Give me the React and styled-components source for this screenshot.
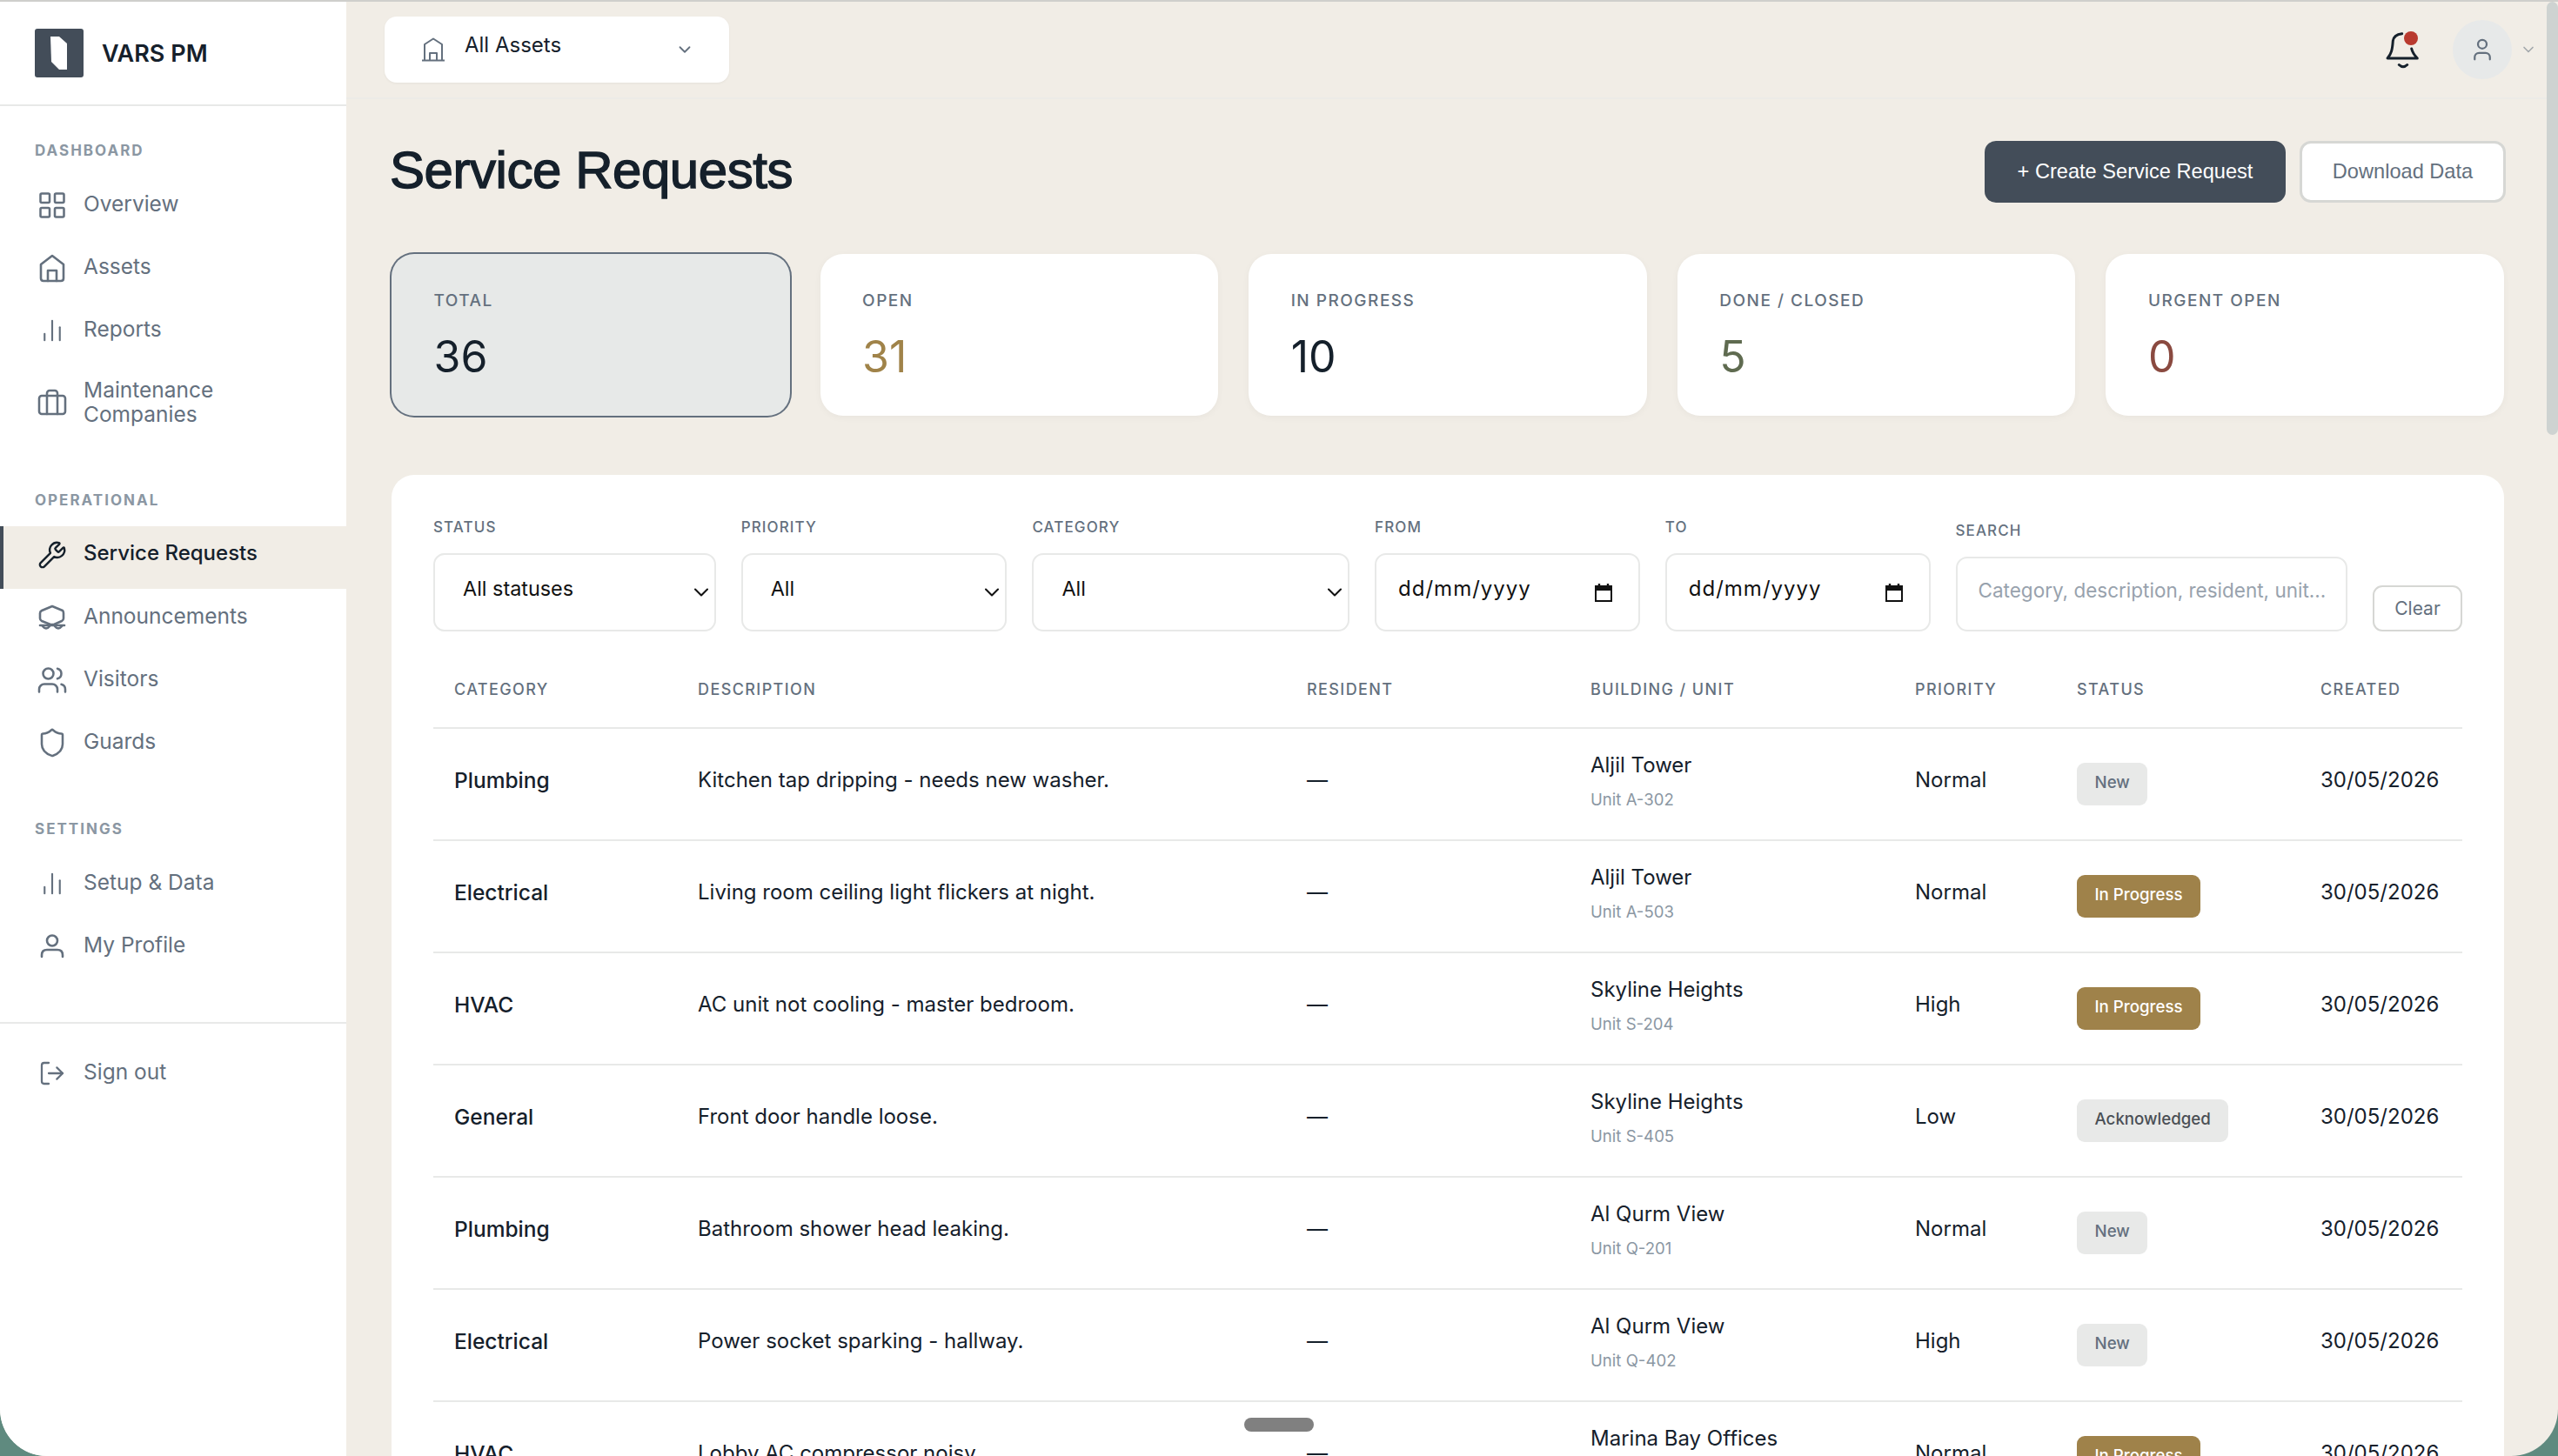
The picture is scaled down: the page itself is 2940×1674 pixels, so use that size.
import React from "react";
import styled, { createGlobalStyle } from "styled-components";
import { LayoutGrid, ChartNoAxesColumn, Briefcase, Wrench, Users, Shield, LogOut, ChevronDown, User } from "lucide-react";

const GlobalStyle = createGlobalStyle`
  html, body {
    margin: 0;
    height: 100%;
    overflow: hidden;
    background: #5f8a7f;
  }
  * { box-sizing: border-box; }
`;

const UI_FONT = `Inter, "Noto Sans", sans-serif`;
const HEAD_FONT = `"Liberation Sans", Arial, sans-serif`;
const INK = "#15202b";
const SLATE = "#64707e";
const MUTED = "#8b97a3";
const LINE = "#e8e9e8";
const COLUMNS = "280px 700px 326px 373px 186px 280px 187px";

const Windowed = styled.div`
  position: relative;
  display: flex;
  width: 2940px;
  height: 1674px;
  overflow: hidden;
  border-top: 2px solid #cfcfcc;
  border-radius: 0 0 54px 54px;
  background: #f1ede6;
  font-family: ${UI_FONT};
  color: ${INK};
`;

const Sidebar = styled.aside`
  flex: 0 0 398px;
  display: flex;
  flex-direction: column;
  background: #fff;
`;

const Brand = styled.div`
  display: flex;
  align-items: center;
  gap: 21px;
  height: 120px;
  padding-left: 40px;
  border-bottom: 2px solid ${LINE};
`;

const BrandName = styled.span`
  font-size: 27px;
  font-weight: 600;
`;

const NavSection = styled.nav`
  padding-top: ${(p) => p.$top}px;
`;

const NavLabel = styled.div`
  height: 24px;
  margin-bottom: 18px;
  padding-left: 40px;
  font-size: 17px;
  line-height: 24px;
  font-weight: 700;
  letter-spacing: 2px;
  color: ${MUTED};
`;

const NavItem = styled.a`
  display: flex;
  align-items: center;
  gap: 18px;
  min-height: ${(p) => (p.$tall ? 96 : 72)}px;
  padding: 0 0 6px 38px;
  border-left: 4px solid ${(p) => (p.$active ? "#434d59" : "transparent")};
  background: ${(p) => (p.$active ? "#f1ede6" : "transparent")};
  color: ${(p) => (p.$active ? INK : SLATE)};
  font-size: ${(p) => (p.$active ? 24 : 24.5)}px;
  font-weight: ${(p) => (p.$active ? 500 : 400)};
  line-height: 28px;
`;

const NavIcon = styled.span`
  flex: 0 0 36px;
  display: flex;
  justify-content: center;
  align-items: center;
  height: 36px;
`;

const NavText = styled.span`
  position: relative;
  top: -2px;
  max-width: 220px;
`;

const SignOutBlock = styled.div`
  margin-top: 48px;
  padding-top: 24px;
  border-top: 2px solid ${LINE};
`;

const Main = styled.main`
  flex: 1;
  min-width: 0;
`;

const Topbar = styled.header`
  display: flex;
  align-items: flex-start;
  justify-content: space-between;
  height: 112px;
  padding: 17px 24px 0 44px;
  border-bottom: 2px solid #ecebe7;
`;

const AssetPicker = styled.div`
  display: flex;
  align-items: center;
  width: 396px;
  height: 76px;
  padding: 0 40px 0 42px;
  gap: 22px;
  border-radius: 14px;
  background: #fff;
  box-shadow: 0 1px 3px rgba(0, 0, 0, 0.05);
  font-size: 24px;
`;

const AssetName = styled.span`
  flex: 1;
  position: relative;
  top: -6px;
`;

const TopActions = styled.div`
  display: flex;
  align-items: center;
  height: 68px;
  margin-top: 4px;
`;

const BellWrap = styled.div`
  position: relative;
  width: 44px;
  height: 48px;
  margin-right: 36px;
`;

const BellDot = styled.span`
  position: absolute;
  left: 24px;
  top: 3px;
  width: 16px;
  height: 16px;
  border-radius: 50%;
  background: #b93a2f;
`;

const Avatar = styled.div`
  display: flex;
  align-items: center;
  justify-content: center;
  width: 68px;
  height: 68px;
  border-radius: 50%;
  background: #e7e9e9;
  color: ${SLATE};
`;

const AvatarCaret = styled.span`
  display: flex;
  margin-left: 9px;
  color: #a3a8ac;
`;

const Content = styled.div`
  padding: 48px 62px 0 52px;
`;

const TitleRow = styled.div`
  display: flex;
  justify-content: space-between;
  align-items: center;
  height: 71px;
`;

const Title = styled.h1`
  margin: 0 0 4px -2px;
  font-family: ${HEAD_FONT};
  font-size: 60px;
  font-weight: 400;
  letter-spacing: -0.45px;
  -webkit-text-stroke: 1.4px ${INK};
  color: ${INK};
`;

const ButtonRow = styled.div`
  display: flex;
  gap: 16px;
  margin-right: -2px;
`;

const Button = styled.button`
  height: 71px;
  width: ${(p) => (p.$primary ? 346 : 237)}px;
  padding: 0;
  border: ${(p) => (p.$primary ? "none" : "3px solid #d6d7d4")};
  border-radius: 13px;
  background: ${(p) => (p.$primary ? "#434d59" : "#fff")};
  color: ${(p) => (p.$primary ? "#fff" : SLATE)};
  font-family: ${HEAD_FONT};
  font-size: 23.6px;
`;

const StatGrid = styled.div`
  display: grid;
  grid-template-columns: repeat(5, 1fr);
  gap: 35px;
  margin-top: 59px;
`;

const StatCard = styled.div`
  height: 186px;
  padding: 42px 48.5px 0;
  border-radius: 26px;
  background: ${(p) => (p.$active ? "#e7e9e8" : "#fff")};
  box-shadow: ${(p) => (p.$active ? `0 0 0 2px ${SLATE}` : "0 2px 8px rgba(0, 0, 0, 0.04)")};
`;

const StatLabel = styled.div`
  font-size: 19px;
  line-height: 24px;
  font-weight: 500;
  letter-spacing: 1.5px;
  color: ${SLATE};
`;

const StatValue = styled.div`
  margin-top: 22px;
  font-size: 50px;
  line-height: 60px;
  color: ${(p) => p.$color};
`;

const Panel = styled.section`
  margin-top: 68px;
  padding: 48px 48px 0;
  border-radius: 26px 26px 0 0;
  background: #fff;
`;

const FilterRow = styled.div`
  display: flex;
  align-items: flex-end;
  gap: 29px;
`;

const Field = styled.label`
  display: block;
  width: ${(p) => p.$width}px;
`;

const FieldLabel = styled.div`
  height: 24px;
  margin-bottom: 18px;
  font-size: 17px;
  line-height: 24px;
  font-weight: 500;
  letter-spacing: 1.1px;
  color: ${SLATE};
`;

const Control = styled.div`
  display: flex;
  align-items: center;
  justify-content: space-between;
  height: ${(p) => (p.$short ? 86 : 90)}px;
  padding: 0 ${(p) => p.$right}px 0 ${(p) => p.$left}px;
  border: 2px solid ${LINE};
  border-radius: 13px;
  background: #fff;
`;

const ControlText = styled.span`
  position: relative;
  top: -5px;
  white-space: nowrap;
  font-size: ${(p) => p.$size}px;
  letter-spacing: ${(p) => p.$spacing || 0}px;
  color: ${(p) => p.$color || "#111"};
`;

const ClearButton = styled.button`
  width: 103px;
  height: 53px;
  padding: 0;
  border: 2px solid #d6d7d4;
  border-radius: 11px;
  background: #fff;
  color: ${SLATE};
  font-family: ${UI_FONT};
  font-size: 21px;
`;

const TableHead = styled.div`
  display: grid;
  grid-template-columns: ${COLUMNS};
  align-items: center;
  height: 92px;
  margin-top: 20px;
  padding-top: 3px;
  border-bottom: 2px solid ${LINE};
`;

const HeadCell = styled.div`
  padding-left: 24px;
  font-size: 18px;
  font-weight: 500;
  letter-spacing: 1.4px;
  color: ${SLATE};
`;

const Row = styled.div`
  display: grid;
  grid-template-columns: ${COLUMNS};
  align-items: center;
  height: 129px;
  border-bottom: 2px solid ${LINE};
`;

const Cell = styled.div`
  padding: 0 0 10px 24px;
  font-size: ${(p) => (p.$strong ? 24.5 : 24)}px;
  font-weight: ${(p) => (p.$strong ? 500 : 400)};
  white-space: nowrap;
`;

const BuildingCell = styled.div`
  padding: 0 0 8px 24px;
`;

const BuildingName = styled.div`
  font-size: 24px;
  line-height: 36px;
`;

const UnitName = styled.div`
  margin-top: 7px;
  font-size: 18.6px;
  line-height: 28px;
  color: ${MUTED};
`;

const BadgeCell = styled.div`
  padding-left: 24px;
`;

const Badge = styled.span`
  display: inline-flex;
  align-items: center;
  height: 49px;
  padding: 0 20.5px 5px;
  border-radius: 9px;
  background: ${(p) => (p.$tone === "progress" ? "#9f824a" : "#e8e9e8")};
  color: ${(p) => (p.$tone === "progress" ? "#fff" : p.$tone === "ack" ? "#4a4f55" : SLATE)};
  font-size: 18.7px;
  font-weight: 500;
`;

const ScrollThumb = styled.div`
  position: absolute;
  top: 0;
  right: 0;
  width: 13px;
  height: 498px;
  border-radius: 7px;
  background: #ced3d1;
`;

const HomePill = styled.div`
  position: absolute;
  left: 1430px;
  bottom: 28px;
  width: 80px;
  height: 16px;
  border-radius: 8px;
  background: #808080;
  box-shadow: 0 0 0 14px rgba(255, 255, 255, 0.35);
`;

const Logo = () => (
  <svg width="56" height="56" viewBox="0 0 56 56">
    <rect width="56" height="56" rx="3" fill="#434d59" />
    <path d="M18 9H28L37 17V47H28L19 38Z" fill="#fff" />
  </svg>
);

const Stroke = ({ children, size = 36, box = 36 }) => (
  <svg width={size} height={size} viewBox={`0 0 ${box} ${box}`} fill="none" stroke="currentColor" strokeWidth="2.6" strokeLinecap="round" strokeLinejoin="round">
    {children}
  </svg>
);

const HouseIcon = () => (
  <Stroke>
    <path d="M5 14L18 4L31 14V30Q31 33 28 33H8Q5 33 5 30Z" />
    <path d="M13 33V21H23V33" />
  </Stroke>
);

const AnnounceIcon = () => (
  <Stroke>
    <path d="M18 5L30 10Q31 11 31 13V19Q31 21 29 22L20 26H16L6 22Q4 21 4 19V13Q4 11 6 10Z" />
    <path d="M4 27H32" />
    <path d="M7 28Q11 33 15 28" />
    <path d="M21 28Q25 33 29 28" />
  </Stroke>
);

const ProfileIcon = () => (
  <Stroke>
    <circle cx="18" cy="11.5" r="6" />
    <path d="M6 30V28Q6 22 12 22H24Q30 22 30 28V30" />
  </Stroke>
);

const lucide = (Icon, size = 36) => () => <Icon size={size} strokeWidth={1.7} />;

const BellIcon = () => (
  <svg width="44" height="48" viewBox="0 0 44 48" fill="none" stroke={INK} strokeWidth="3" strokeLinecap="round" strokeLinejoin="round">
    <path d="M21.7 5.7C15 6.5 12 9 11.3 14C10.6 24 9.5 29 5 34H39.3C35.5 30 33.6 27 32.7 23" />
    <path d="M18.3 41.5Q23 46 27.7 41.5" />
  </svg>
);

const CalendarIcon = () => (
  <svg width="22" height="22" viewBox="0 0 22 22" fill="none">
    <path d="M2 4H20V21H2Z" stroke="#111" strokeWidth="2" />
    <path d="M2 4H20V9H2Z" fill="#111" />
    <path d="M6 1V5M16 1V5" stroke="#111" strokeWidth="2.4" />
  </svg>
);

const GateIcon = () => (
  <svg width="28" height="28" viewBox="0 0 28 28" fill="none" stroke={SLATE} strokeWidth="2" strokeLinejoin="round">
    <path d="M1 26.5H27" />
    <path d="M4 26.5V8L14 1.5L24 8V26.5" />
    <path d="M10 26.5V18H18V26.5" />
  </svg>
);

const navGroups = [
  {
    top: 39,
    label: "DASHBOARD",
    items: [
      { text: "Overview", icon: lucide(LayoutGrid) },
      { text: "Assets", icon: HouseIcon },
      { text: "Reports", icon: lucide(ChartNoAxesColumn, 30) },
      { text: "Maintenance Companies", icon: lucide(Briefcase), tall: true },
    ],
  },
  {
    top: 48,
    label: "OPERATIONAL",
    items: [
      { text: "Service Requests", icon: lucide(Wrench, 34), active: true },
      { text: "Announcements", icon: AnnounceIcon },
      { text: "Visitors", icon: lucide(Users) },
      { text: "Guards", icon: lucide(Shield) },
    ],
  },
  {
    top: 48,
    label: "SETTINGS",
    items: [
      { text: "Setup & Data", icon: lucide(ChartNoAxesColumn, 30) },
      { text: "My Profile", icon: ProfileIcon },
    ],
  },
];

const stats = [
  { label: "TOTAL", value: 36, color: INK, active: true },
  { label: "OPEN", value: 31, color: "#a08349" },
  { label: "IN PROGRESS", value: 10, color: INK },
  { label: "DONE / CLOSED", value: 5, color: "#5f6b50" },
  { label: "URGENT OPEN", value: 0, color: "#8a4a40" },
];

const columns = ["CATEGORY", "DESCRIPTION", "RESIDENT", "BUILDING / UNIT", "PRIORITY", "STATUS", "CREATED"];

const requests = [
  ["Plumbing", "Kitchen tap dripping - needs new washer.", "Aljil Tower", "Unit A-302", "Normal", "New"],
  ["Electrical", "Living room ceiling light flickers at night.", "Aljil Tower", "Unit A-503", "Normal", "In Progress"],
  ["HVAC", "AC unit not cooling - master bedroom.", "Skyline Heights", "Unit S-204", "High", "In Progress"],
  ["General", "Front door handle loose.", "Skyline Heights", "Unit S-405", "Low", "Acknowledged"],
  ["Plumbing", "Bathroom shower head leaking.", "Al Qurm View", "Unit Q-201", "Normal", "New"],
  ["Electrical", "Power socket sparking - hallway.", "Al Qurm View", "Unit Q-402", "High", "New"],
  ["HVAC", "Lobby AC compressor noisy.", "Marina Bay Offices", "Unit M-110", "Normal", "In Progress"],
];

const badgeTone = { New: "new", "In Progress": "progress", Acknowledged: "ack" };

function SelectField({ label, value, width }) {
  return (
    <Field $width={width}>
      <FieldLabel>{label}</FieldLabel>
      <Control $left={32} $right={1}>
        <ControlText $size={23.4}>{value}</ControlText>
        <ChevronDown size={28} strokeWidth={1.8} color="#111" />
      </Control>
    </Field>
  );
}

function DateField({ label }) {
  return (
    <Field $width={305}>
      <FieldLabel>{label}</FieldLabel>
      <Control $left={25} $right={29}>
        <ControlText $size={24} $spacing={1}>dd/mm/yyyy</ControlText>
        <CalendarIcon />
      </Control>
    </Field>
  );
}

export default function App() {
  return (
    <>
      <GlobalStyle />
      <Windowed>
        <Sidebar>
          <Brand>
            <Logo />
            <BrandName>VARS PM</BrandName>
          </Brand>
          {navGroups.map((group) => (
            <NavSection key={group.label} $top={group.top}>
              <NavLabel>{group.label}</NavLabel>
              {group.items.map((item) => (
                <NavItem key={item.text} $active={item.active} $tall={item.tall}>
                  <NavIcon>
                    <item.icon />
                  </NavIcon>
                  <NavText>{item.text}</NavText>
                </NavItem>
              ))}
            </NavSection>
          ))}
          <SignOutBlock>
            <NavItem>
              <NavIcon>
                <LogOut size={32} strokeWidth={1.7} />
              </NavIcon>
              <NavText>Sign out</NavText>
            </NavItem>
          </SignOutBlock>
        </Sidebar>

        <Main>
          <Topbar>
            <AssetPicker>
              <GateIcon />
              <AssetName>All Assets</AssetName>
              <ChevronDown size={22} strokeWidth={2} color={SLATE} />
            </AssetPicker>
            <TopActions>
              <BellWrap>
                <BellIcon />
                <BellDot />
              </BellWrap>
              <Avatar>
                <User size={30} strokeWidth={1.8} />
              </Avatar>
              <AvatarCaret>
                <ChevronDown size={20} strokeWidth={2} />
              </AvatarCaret>
            </TopActions>
          </Topbar>

          <Content>
            <TitleRow>
              <Title>Service Requests</Title>
              <ButtonRow>
                <Button $primary>+ Create Service Request</Button>
                <Button>Download Data</Button>
              </ButtonRow>
            </TitleRow>

            <StatGrid>
              {stats.map((stat) => (
                <StatCard key={stat.label} $active={stat.active}>
                  <StatLabel>{stat.label}</StatLabel>
                  <StatValue $color={stat.color}>{stat.value}</StatValue>
                </StatCard>
              ))}
            </StatGrid>

            <Panel>
              <FilterRow>
                <SelectField label="STATUS" value="All statuses" width={325} />
                <SelectField label="PRIORITY" value="All" width={306} />
                <SelectField label="CATEGORY" value="All" width={365} />
                <DateField label="FROM" />
                <DateField label="TO" />
                <Field $width={451}>
                  <FieldLabel>SEARCH</FieldLabel>
                  <Control $short $left={24} $right={10}>
                    <ControlText $size={22.5} $color="#98a2ad">Category, description, resident, unit...</ControlText>
                  </Control>
                </Field>
                <ClearButton>Clear</ClearButton>
              </FilterRow>

              <TableHead>
                {columns.map((name) => (
                  <HeadCell key={name}>{name}</HeadCell>
                ))}
              </TableHead>
              {requests.map(([category, description, building, unit, priority, status], index) => (
                <Row key={index}>
                  <Cell $strong>{category}</Cell>
                  <Cell>{description}</Cell>
                  <Cell>—</Cell>
                  <BuildingCell>
                    <BuildingName>{building}</BuildingName>
                    <UnitName>{unit}</UnitName>
                  </BuildingCell>
                  <Cell>{priority}</Cell>
                  <BadgeCell>
                    <Badge $tone={badgeTone[status]}>{status}</Badge>
                  </BadgeCell>
                  <Cell>30/05/2026</Cell>
                </Row>
              ))}
            </Panel>
          </Content>
        </Main>

        <ScrollThumb />
        <HomePill />
      </Windowed>
    </>
  );
}
